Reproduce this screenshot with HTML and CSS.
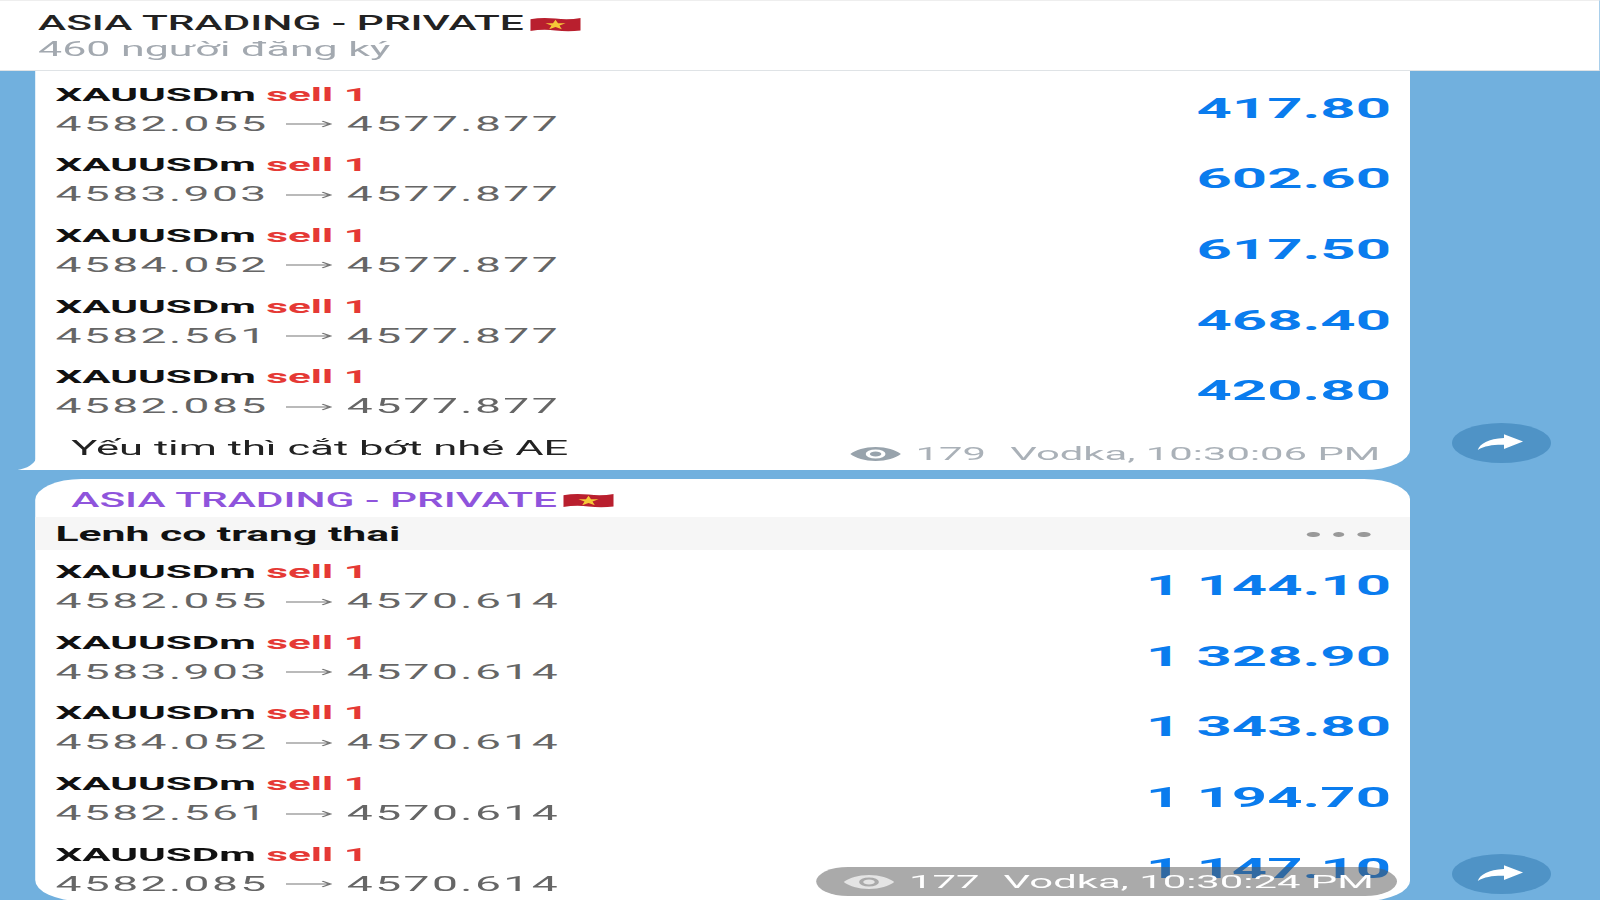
FILE: index.html
```html
<!DOCTYPE html>
<html lang="en">
<head>
    <meta charset="UTF-8">
    <meta name="viewport" content="width=device-width, initial-scale=1.0">
    <title>ASIA TRADING - PRIVATE</title>
    <link rel="stylesheet" href="styles.css">
</head>
<body>
    <svg class="defs" width="0" height="0">
        <defs>
            <symbol id="flag" viewBox="0 0 24 14" preserveAspectRatio="none">
                <path d="M0 2 Q6 0 12 1.5 T24 1 V12.5 Q18 14 12 12.500 T0 13 Z" fill="#b91f2e"/>
                <path d="M12 2.500l1.200 3.400h3.600l-2.900 2.100 1.100 3.400-3-2.100-3 2.100 1.100-3.400-2.900-2.100h3.600z" fill="#f5c838"/>
            </symbol>
            <symbol id="eye" viewBox="0 0 24 16" preserveAspectRatio="none">
                <path fill-rule="evenodd" d="M12 1C7 1 3 4 0.500 8 3 12 7 15 12 15s9-3 11.500-7C21 4 17 1 12 1zm0 2.500a4.500 4.500 0 1 1 0 9 4.500 4.500 0 0 1 0-9z"/>
                <circle cx="12" cy="8" r="2.600"/>
            </symbol>
            <symbol id="share" viewBox="0 0 24 24">
                <path d="M13.500 6.500V3l8 6.800-8 6.700v-3.700c-4.600-.2-8 .9-11 4.700.9-5.600 4.400-10.200 11-11z" fill="#fff"/>
            </symbol>
            <symbol id="arrow" viewBox="0 0 21 8">
                <path d="M0 4H20M16.500 1.200L20.300 4l-3.800 2.800" fill="none" stroke="#777" stroke-width="1"/>
            </symbol>
        </defs>
    </svg>

    <div class="screen">
        <header class="top">
            <div class="top-title">ASIA TRADING - PRIVATE<svg class="flag"><use href="#flag"/></svg></div>
            <div class="top-sub">460 người đăng ký</div>
        </header>

        <div class="msg msg-first">
            <div class="bubble bubble-first">
                <svg class="tail" viewBox="0 0 10 12" preserveAspectRatio="none"><path d="M10 0C9 6 5 10.500 0 12H10z" fill="#fff"/></svg>
                <div class="rows">
                    <div class="row">
                        <div><div class="sym">XAUUSDm <span class="side">sell 1</span></div><div class="prices">4582.055<svg class="arrow"><use href="#arrow"/></svg>4577.877</div></div>
                        <div class="amount">417.80</div>
                    </div>
                    <div class="row">
                        <div><div class="sym">XAUUSDm <span class="side">sell 1</span></div><div class="prices">4583.903<svg class="arrow"><use href="#arrow"/></svg>4577.877</div></div>
                        <div class="amount">602.60</div>
                    </div>
                    <div class="row">
                        <div><div class="sym">XAUUSDm <span class="side">sell 1</span></div><div class="prices">4584.052<svg class="arrow"><use href="#arrow"/></svg>4577.877</div></div>
                        <div class="amount">617.50</div>
                    </div>
                    <div class="row">
                        <div><div class="sym">XAUUSDm <span class="side">sell 1</span></div><div class="prices">4582.561<svg class="arrow"><use href="#arrow"/></svg>4577.877</div></div>
                        <div class="amount">468.40</div>
                    </div>
                    <div class="row">
                        <div><div class="sym">XAUUSDm <span class="side">sell 1</span></div><div class="prices">4582.085<svg class="arrow"><use href="#arrow"/></svg>4577.877</div></div>
                        <div class="amount">420.80</div>
                    </div>
                </div>
                <div class="foot">
                    <div class="caption">Yếu tim thì cắt bớt nhé AE</div>
                    <div class="meta"><svg class="eye"><use href="#eye"/></svg><span class="views">179</span><span>Vodka, 10:30:06 PM</span></div>
                </div>
            </div>
            <div class="share"><svg class="share-icon"><use href="#share"/></svg></div>
        </div>

        <div class="msg msg-second">
            <div class="bubble bubble-second">
                <div class="fwd">ASIA TRADING - PRIVATE<svg class="flag"><use href="#flag"/></svg></div>
                <div class="band">
                    <span>Lenh co trang thai</span>
                    <div class="dots"><i></i><i></i><i></i></div>
                </div>
                <div class="rows">
                    <div class="row">
                        <div><div class="sym">XAUUSDm <span class="side">sell 1</span></div><div class="prices">4582.055<svg class="arrow"><use href="#arrow"/></svg>4570.614</div></div>
                        <div class="amount">1 144.10</div>
                    </div>
                    <div class="row">
                        <div><div class="sym">XAUUSDm <span class="side">sell 1</span></div><div class="prices">4583.903<svg class="arrow"><use href="#arrow"/></svg>4570.614</div></div>
                        <div class="amount">1 328.90</div>
                    </div>
                    <div class="row">
                        <div><div class="sym">XAUUSDm <span class="side">sell 1</span></div><div class="prices">4584.052<svg class="arrow"><use href="#arrow"/></svg>4570.614</div></div>
                        <div class="amount">1 343.80</div>
                    </div>
                    <div class="row">
                        <div><div class="sym">XAUUSDm <span class="side">sell 1</span></div><div class="prices">4582.561<svg class="arrow"><use href="#arrow"/></svg>4570.614</div></div>
                        <div class="amount">1 194.70</div>
                    </div>
                    <div class="row">
                        <div><div class="sym">XAUUSDm <span class="side">sell 1</span></div><div class="prices">4582.085<svg class="arrow"><use href="#arrow"/></svg>4570.614</div></div>
                        <div class="amount">1 147.10</div>
                    </div>
                </div>
                <div class="pill"><svg class="eye"><use href="#eye"/></svg><span class="views">177</span><span>Vodka, 10:30:24 PM</span></div>
            </div>
            <div class="share"><svg class="share-icon"><use href="#share"/></svg></div>
        </div>
    </div>
</body>
</html>
```

FILE: styles.css
```css
html, body {
    margin: 0;
    height: 100%;
    overflow: hidden;
    background-color: #71b0de;
}

.defs {
    position: absolute;
}

/* the whole capture is stretched sideways, so lay out narrow and scale */
.screen {
    width: 727.27px;
    height: 900px;
    transform: scaleX(2.2);
    transform-origin: 0 0;
    font-family: Roboto, "Liberation Sans", sans-serif;
    font-size: 19.300px;
}

.top {
    height: 71px;
    box-sizing: border-box;
    padding: 12px 0 0 17.300px;
    background: #fff;
    border-top: 1px solid #eee;
    border-bottom: 1px solid #dfe3e6;
}

.top-title {
    display: flex;
    align-items: center;
    gap: 3px;
    line-height: 22px;
    font-weight: 500;
    color: #222;
    white-space: pre;
}

.top-sub {
    margin-top: 3px;
    line-height: 24px;
    font-size: 19.500px;
    color: #a3a9b0;
}

.flag {
    width: 23px;
    height: 15px;
}

.msg {
    display: flex;
    align-items: flex-end;
    gap: 18.400px;
    padding-left: 16.400px;
}

.msg-second {
    margin-top: 9px;
}

.bubble {
    position: relative;
    width: 625px;
    background: #fff;
}

.bubble-first {
    height: 399px;
    padding-top: 9.500px;
    box-sizing: border-box;
    border-radius: 0 0 21px 0;
}

.bubble-second {
    height: 422px;
    border-radius: 21px;
}

.tail {
    position: absolute;
    left: -8px;
    bottom: 0;
    width: 8.500px;
    height: 12px;
}

.rows {
    display: flex;
    flex-direction: column;
    gap: 12.700px;
    padding: 0 9.100px 0 8.800px;
}

.row {
    display: flex;
    justify-content: space-between;
    align-items: center;
    height: 58px;
    white-space: pre;
}

.sym {
    line-height: 27px;
    font-size: 19.200px;
    font-weight: 700;
    color: #111;
}

.side {
    color: #e53935;
}

.prices {
    display: flex;
    align-items: center;
    margin-top: 2px;
    line-height: 29px;
    font-size: 21px;
    letter-spacing: 1.100px;
    color: #666;
}

.arrow {
    width: 21px;
    height: 8px;
    margin: 0 6.500px 0 8px;
}

.amount {
    margin-top: -3px;
    font-size: 28px;
    font-weight: 700;
    color: #0a7cee;
}

.foot {
    display: flex;
    justify-content: space-between;
    padding: 15px 14px 0 16px;
}

.caption {
    margin-top: 1px;
    line-height: 24px;
    font-size: 19.800px;
    color: #222;
}

.meta {
    display: flex;
    align-items: center;
    gap: 6px;
    margin-top: 6px;
    line-height: 24px;
    font-size: 19px;
    color: #aab1b8;
}

.meta .eye {
    color: #98a3ac;
}

.eye {
    width: 24px;
    height: 16px;
    fill: currentColor;
}

.views {
    margin-right: 5px;
}

.fwd {
    display: flex;
    align-items: center;
    gap: 3px;
    height: 38px;
    padding: 5px 0 0 16px;
    box-sizing: border-box;
    font-weight: 500;
    color: #8f54dc;
    white-space: pre;
}

.band {
    display: flex;
    justify-content: space-between;
    align-items: center;
    height: 33px;
    margin-bottom: 8px;
    padding: 1px 18.600px 0 8.800px;
    box-sizing: border-box;
    background: #f6f6f6;
    font-size: 19.400px;
    font-weight: 700;
    color: #111;
}

.dots {
    display: flex;
    gap: 6px;
}

.dots i {
    width: 5.500px;
    height: 5px;
    border-radius: 50%;
    background: #999;
}

.pill {
    position: absolute;
    right: 6px;
    bottom: 5px;
    display: flex;
    align-items: center;
    gap: 6px;
    height: 29px;
    padding: 0 11px 0 12px;
    border-radius: 15px;
    background: rgba(85, 85, 85, 0.5);
    font-size: 19px;
    color: #fff;
}

.pill .eye {
    color: #e4e4e4;
}

.share {
    display: flex;
    align-items: center;
    justify-content: center;
    flex-shrink: 0;
    width: 45px;
    height: 40px;
    margin-bottom: 7px;
    border-radius: 50%;
    background: #4f93c6;
}

.share-icon {
    width: 26px;
    height: 26px;
    margin-top: 2px;
}
```
